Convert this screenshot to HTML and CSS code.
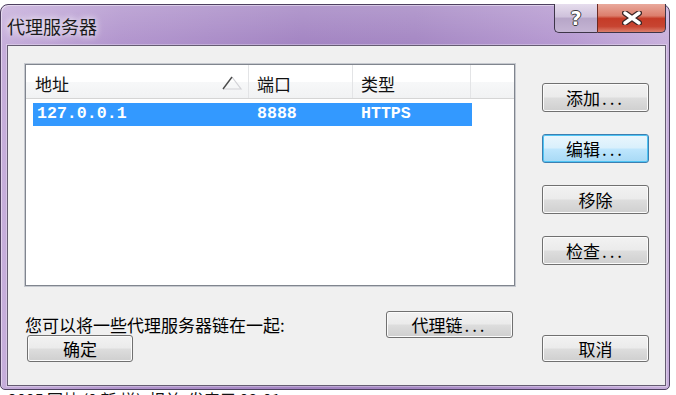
FILE: index.html
```html
<!DOCTYPE html>
<html lang="zh-CN">

<head>
    <meta charset="UTF-8" />
    <meta name="viewport" content="width=device-width, initial-scale=1.0" />
    <title>代理服务器</title>

    <!-- css -->

    <link rel="stylesheet" href="styles.css">

</head>

<body>
    <div class="window">

        <div class="titlebar">
            <span class="title">代理服务器</span>
            <div class="caption">
                <button class="cap help">?</button>
                <button class="cap close">
                    <svg width="20" height="14" viewBox="0 0 20 14">
                        <path d="M3 2 L17 12 M17 2 L3 12" stroke="#3b2525" stroke-width="6" stroke-linecap="round" fill="none" />
                        <path d="M3 2 L17 12 M17 2 L3 12" stroke="#ffffff" stroke-width="3.4" stroke-linecap="round" fill="none" />
                    </svg>
                </button>
            </div>
        </div>

        <div class="client">

            <div class="top">
                <div class="listview">
                    <div class="lv-header">
                        <div class="col first">
                            <span>地址</span>
                            <svg class="sort" width="21" height="14" viewBox="0 0 21 14">
                                <path d="M10 1 L19 13 L1 13" stroke="#d2d2d6" stroke-width="1.2" fill="none" />
                                <path d="M1 13 L10 1" stroke="#4a4a4a" stroke-width="1.4" fill="none" />
                            </svg>
                        </div>
                        <div class="col">端口</div>
                        <div class="col">类型</div>
                        <div class="col last"></div>
                    </div>
                    <div class="lv-row selected">
                        <div class="cell">127.0.0.1</div>
                        <div class="cell">8888</div>
                        <div class="cell">HTTPS</div>
                    </div>
                </div>

                <div class="side">
                    <button class="btn">添加<span class="dots">...</span></button>
                    <button class="btn default">编辑<span class="dots">...</span></button>
                    <button class="btn">移除</button>
                    <button class="btn">检查<span class="dots">...</span></button>
                </div>
            </div>

            <div class="chain-row">
                <span class="hint">您可以将一些代理服务器链在一起:</span>
                <button class="btn chain">代理链<span class="dots">...</span></button>
            </div>

            <div class="action-row">
                <button class="btn ok">确定</button>
                <button class="btn cancel">取消</button>
            </div>

        </div>
    </div>

    <p class="behind">2005 回帖 (0 新 增)&nbsp; 相关&nbsp; 发表于 08-01</p>
</body>

</html>
```

FILE: styles.css
```css
body {
    margin: 0;
    background-color: #ffffff;
    overflow: hidden;
    font-family: "Noto Sans CJK SC", "Noto Sans", sans-serif;
}

button {
    font-family: inherit;
    cursor: pointer;
}

/* window frame */

.window {
    box-sizing: border-box;
    width: 670px;
    height: 386px;
    margin-top: 4px;
    padding: 0 3px 3px 6px;
    border: 1px solid #4e4060;
    border-radius: 8px 8px 5px 5px;
    display: flex;
    flex-direction: column;
    background:
        linear-gradient(180deg, rgba(255, 255, 255, 0.18), rgba(255, 255, 255, 0) 42px),
        linear-gradient(90deg, #c6aedb 0%, #b194cd 18%, #a283c2 45%, #a486c3 62%, #b699d1 85%, #c8b0dc 100%);
    box-shadow: inset 1px 1px 0 rgba(255, 255, 255, 0.45);
}

.titlebar {
    height: 40px;
    display: flex;
    justify-content: space-between;
    align-items: flex-start;
}

.title {
    align-self: center;
    margin-top: 2px;
    font-size: 18px;
    line-height: 1;
    color: #1b1b1b;
    text-shadow: 0 0 6px rgba(255, 255, 255, 0.9), 0 0 10px rgba(255, 255, 255, 0.6);
}

.caption {
    display: flex;
    margin-top: -1px;
}

.cap {
    height: 29px;
    padding: 0;
    border: 1px solid #3d3548;
    border-top: none;
    display: flex;
    align-items: center;
    justify-content: center;
}

.cap.help {
    width: 43px;
    border-right: none;
    border-radius: 0 0 0 5px;
    background: linear-gradient(#e6dded, #cfc2dc 45%, #b7a6c8 52%, #c5b5d4 100%);
    color: #ffffff;
    font-family: "DejaVu Sans", sans-serif;
    font-weight: bold;
    font-size: 19px;
    text-shadow: 1px 0 0 #3a3a3a, -1px 0 0 #3a3a3a, 0 1px 0 #3a3a3a, 0 -1px 0 #3a3a3a;
}

.cap.close {
    width: 69px;
    border-left: 1px solid #6b2a22;
    border-radius: 0 0 5px 0;
    background: linear-gradient(#e9a99c 0%, #dc7e6c 42%, #c53b27 52%, #c74431 80%, #dc7f6c 100%);
}

/* client area */

.client {
    flex: 1;
    box-sizing: border-box;
    padding: 18px 16px 0 17px;
    background-color: #f0f0f0;
    border: 1px solid #655c72;
    box-shadow: 0 0 0 1px rgba(255, 255, 255, 0.3);
}

.top {
    display: flex;
    gap: 27px;
}

.listview {
    box-sizing: border-box;
    width: 490px;
    height: 222px;
    background-color: #ffffff;
    border: 1px solid #80858e;
    box-shadow: 0 0 0 1px #c6c9cf;
}

.lv-header {
    display: grid;
    grid-template-columns: 223px 104px 118px 1fr;
    height: 33px;
    background: linear-gradient(#ffffff 0%, #ffffff 50%, #f7f8f9 51%, #f1f2f3 100%);
    border-bottom: 1px solid #d5d5d5;
}

.col {
    display: flex;
    align-items: center;
    padding: 3px 0 0 8px;
    font-size: 17px;
    line-height: 1;
    color: #111111;
    border-right: 1px solid #e3e4e6;
}

.col.first {
    justify-content: space-between;
    padding-left: 9px;
    padding-right: 5px;
}

.col.last {
    border-right: none;
}

.lv-row {
    display: grid;
    grid-template-columns: 216px 104px 119px;
    width: 439px;
    height: 23px;
    margin: 4px 0 0 7px;
}

.lv-row.selected {
    background-color: #3399ff;
    color: #ffffff;
}

.cell {
    display: flex;
    align-items: center;
    padding-left: 8px;
    font-family: "Liberation Mono", monospace;
    font-weight: bold;
    font-size: 16.6px;
    line-height: 1;
}

.cell:first-child {
    padding-left: 4px;
}

/* buttons */

.side {
    display: flex;
    flex-direction: column;
    gap: 22px;
    padding-top: 19px;
}

.btn {
    box-sizing: border-box;
    width: 107px;
    height: 29px;
    padding: 0;
    border: 1px solid #707070;
    border-radius: 3px;
    background: linear-gradient(#f2f2f2 0%, #ebebeb 48%, #dddddd 52%, #cfcfcf 100%);
    box-shadow: inset 0 0 0 1px #fbfbfb;
    font-size: 17px;
    line-height: 1;
    color: #000000;
    display: flex;
    align-items: center;
    justify-content: center;
}

.btn.default {
    border-color: #3c7fb1;
    background: linear-gradient(#eaf6fd 0%, #d9f0fc 48%, #bee6fd 52%, #a7d9f5 100%);
    box-shadow: inset 0 0 0 1px #4fc4f4;
}

.dots {
    letter-spacing: 3px;
    margin-left: 2px;
}

.chain-row {
    display: grid;
    grid-template-columns: 361px 127px;
    align-items: center;
    margin-top: 25px;
    height: 27px;
}

.hint {
    font-size: 17px;
    line-height: 1;
    color: #000000;
}

.btn.chain {
    width: 127px;
    height: 27px;
}

.action-row {
    display: flex;
    justify-content: space-between;
    margin-top: -3px;
    padding-left: 2px;
}

.btn.ok {
    width: 106px;
    height: 27px;
}

.btn.cancel {
    height: 27px;
}

/* text of the page behind the dialog */

.behind {
    margin: 0;
    padding: 1px 0 0 8px;
    font-size: 16px;
    line-height: 16px;
    color: #111111;
}
```
